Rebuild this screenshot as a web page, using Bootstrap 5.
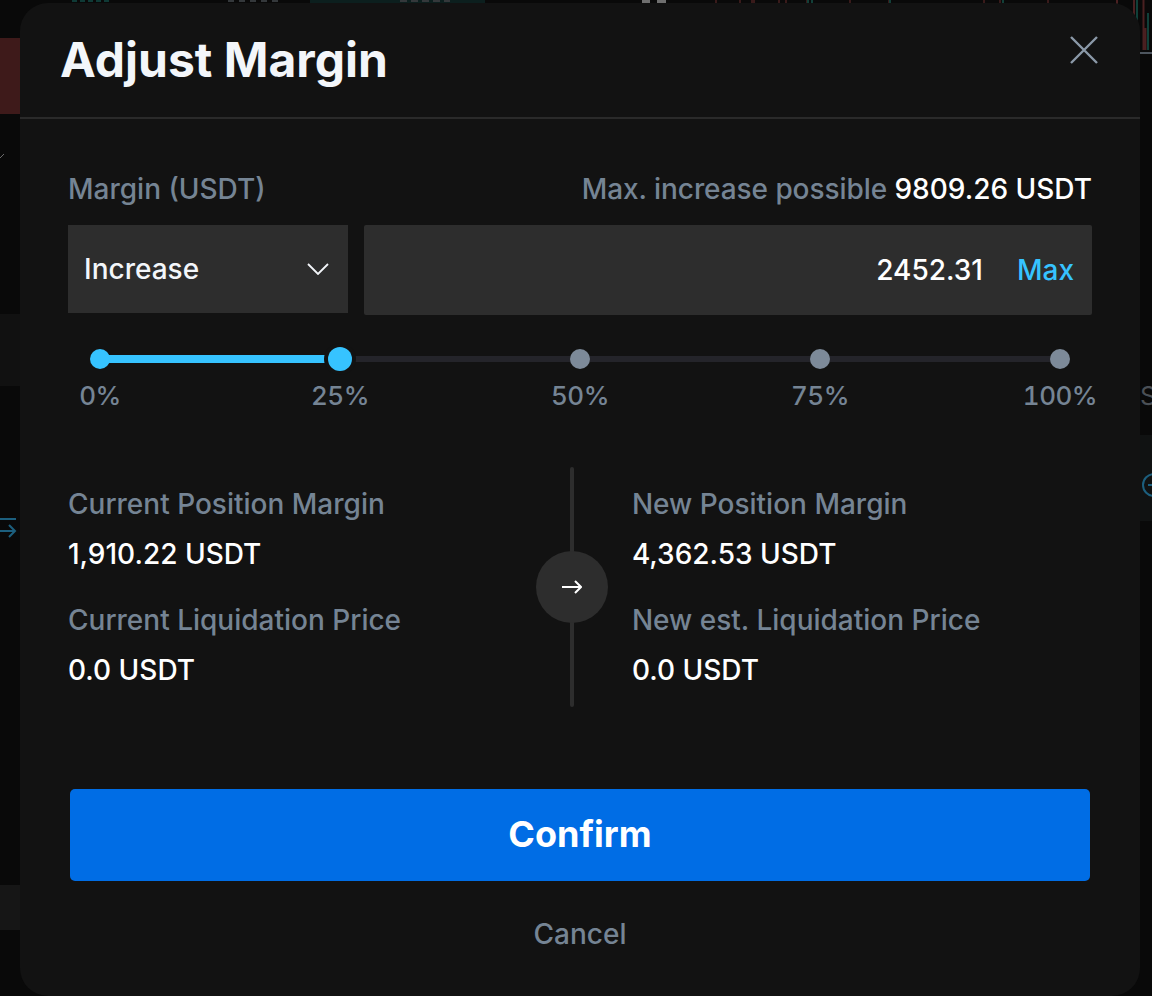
<!DOCTYPE html>
<html lang="en">
<head>
  <meta charset="UTF-8" />
  <meta name="viewport" content="width=device-width, initial-scale=1" />
  <title>Adjust Margin</title>
  <link rel="stylesheet" href="https://cdn.jsdelivr.net/npm/bootstrap@5.3.0/dist/css/bootstrap.min.css" />
  <style>
    html, body { height: 996px; overflow: hidden; }
    body { background: #090909; font-family: Inter, "Liberation Sans", sans-serif; }

    /* dimmed page behind the dialog */
    .bg-piece { position: absolute; }
    .bg-red { left: 0; top: 38px; width: 20px; height: 76px; background: #3e1a1a; }
    .bg-band-a { left: 0; top: 314px; width: 20px; height: 72px; background: #111; }
    .bg-band-b { left: 0; top: 885px; width: 20px; height: 45px; background: #161616; }
    .bg-band-c { left: 1140px; top: 435px; width: 12px; height: 86px; background: #101212; }
    .bg-s { left: 1140px; top: 382px; color: #4a4f55; font-size: 26px; line-height: 28px; }
    .bg-art { left: 0; top: 0; }

    .adjust-modal { position: absolute; left: 20px; top: 3px; width: 1120px; height: 993px; background: #121212; border-radius: 28px; }
    .adjust-head { height: 116px; border-bottom: 2px solid #2a2a2a; padding: 0 40px; }
    .adjust-title { font-size: 48px; font-weight: 700; line-height: 114px; color: #f3f6fa; margin: 0; }
    .adjust-close { position: absolute; right: 42px; top: 33px; background: none; border: 0; padding: 0; line-height: 0; }

    .adjust-body { padding: 52px 48px 0; }
    .label-row { height: 36px; margin-bottom: 18px; font-size: 28px; font-weight: 500; line-height: 36px; }
    .muted-text { color: #758494; }
    .max-note { letter-spacing: -.07px; }
    .white-text { color: #fff; letter-spacing: 0; }
    .field-row { gap: 16px; }
    .side-select { width: 280px; height: 88px; background: #2d2d2d; color: #f3f6fa; padding: 0 19px 0 16px; font-size: 28px; font-weight: 500; }
    .amount-box { width: 728px; height: 90px; background: #2d2d2d; border-radius: 2px; padding: 0 18px 0 16px; font-size: 28px; font-weight: 500; color: #fff; }
    .max-link { color: #36c3ff; margin-left: 34px; }

    .slider-wrap { position: relative; height: 24px; margin: 32px 20px 0 20px; }
    .slider-track { position: absolute; left: 12px; right: 12px; top: 9px; height: 6px; background: #24242a; }
    .slider-fill { position: absolute; left: 12px; width: 240px; top: 8px; height: 8px; background: #36c3ff; }
    .slider-dot { position: absolute; top: 2px; width: 20px; height: 20px; margin-left: -10px; border-radius: 50%; background: #7d8a99; }
    .dot-on { background: #36c3ff; }
    .dot-big { top: 0; width: 24px; height: 24px; margin-left: -12px; box-shadow: 0 0 0 4px #121212; }
    .slider-labels { height: 36px; margin: 7px 0 0; position: relative; font-size: 26px; font-weight: 500; line-height: 36px; color: #758494; font-variant-numeric: tabular-nums; letter-spacing: -.5px; }
    .slider-labels span { position: absolute; transform: translateX(-50%); }

    .info-grid { height: 240px; margin-top: 53px; }
    .info-col { width: 504px; }
    .info-right { padding-left: 58px; width: 520px; }
    .info-label { font-size: 28px; font-weight: 500; line-height: 36px; color: #758494; margin-top: 19px; }
    .info-value { font-size: 28px; font-weight: 500; line-height: 36px; color: #fff; margin-top: 14px; margin-bottom: 30px; }
    .info-divider { width: 4px; height: 240px; background: #2d2d2d; border-radius: 2px; position: relative; }
    .arrow-badge { position: absolute; left: -34px; top: 84px; width: 72px; height: 72px; border-radius: 50%; background: #2d2d2d; }

    .confirm-btn { display: block; width: 1020px; height: 92px; margin: 82px 0 0 2px; padding: 0 0 2px; border: 0; border-radius: 5px; background: #006de5; color: #fff; font-size: 36px; font-weight: 700; }
    .cancel-btn { display: block; width: 1020px; margin: 32px 0 0 2px; background: none; border: 0; padding: 0; color: #758494; font-size: 28px; font-weight: 500; line-height: 42px; text-align: center; }
  </style>
</head>
<body>
  <!-- page behind the dialog -->
  <div class="bg-piece bg-red"></div>
  <div class="bg-piece bg-band-a"></div>
  <div class="bg-piece bg-band-b"></div>
  <div class="bg-piece bg-band-c"></div>
  <div class="bg-piece bg-s">S</div>
  <svg class="bg-piece bg-art" width="1152" height="996" viewBox="0 0 1152 996" fill="none">
    <rect x="310" y="0" width="175" height="3" fill="#0c1f1e"/>
    <path d="M72 0h40" stroke="#0f3a36" stroke-width="4" stroke-dasharray="5 3"/>
    <path d="M228 0h52" stroke="#34383b" stroke-width="4" stroke-dasharray="6 5"/>
    <path d="M400 0h50" stroke="#34383b" stroke-width="4" stroke-dasharray="7 4"/>
    <rect x="642" y="0" width="8" height="3" fill="#6f6f6f"/>
    <rect x="657" y="0" width="9" height="3" fill="#6f6f6f"/>
    <path d="M716 0v3M740 0v3M752 0v3M754 0v3M779 0v3M786 0v3M807 0v3M850 0v3M889 0v3M984 0v3M1000 0v3M1048 0v3" stroke="#4a2021" stroke-width="1.500"/>
    <path d="M808 0v3M812 0v3M890 0v3M1003 0v3" stroke="#124039" stroke-width="2"/>
    <path d="M1117 0v5M1134 0v18" stroke="#4a2021" stroke-width="2"/>
    <path d="M1137 0v24" stroke="#104039" stroke-width="2"/>
    <path d="M1143.500 0v50M1145.500 28v22" stroke="#4a2021" stroke-width="2"/>
    <path d="M1148 13v37" stroke="#104039" stroke-width="2"/>
    <rect x="1140" y="52" width="12" height="2" fill="#4d555e"/>
    <path d="M0 158l4-4" stroke="#6b6b6b" stroke-width="1"/>
    <path d="M0 519h16M0 531h15M9 525l6 6-6 6" stroke="#1c5f7e" stroke-width="2"/>
    <circle cx="1154" cy="485" r="11" stroke="#1c5f7e" stroke-width="2"/>
    <path d="M1148 485h4" stroke="#1c5f7e" stroke-width="2"/>
  </svg>

  <div class="adjust-modal">
    <div class="adjust-head">
      <h1 class="adjust-title">Adjust Margin</h1>
      <button class="adjust-close" type="button" aria-label="Close">
        <svg width="28" height="28" viewBox="0 0 28 28" fill="none" stroke="#8b99a8" stroke-width="2.4"><path d="M1 1l26 26M27 1L1 27"/></svg>
      </button>
    </div>

    <div class="adjust-body">
      <div class="label-row d-flex justify-content-between">
        <span class="muted-text">Margin (USDT)</span>
        <span class="muted-text max-note">Max. increase possible <span class="white-text">9809.26 USDT</span></span>
      </div>

      <div class="field-row d-flex align-items-start">
        <div class="side-select d-flex align-items-center justify-content-between">
          <span>Increase</span>
          <svg width="22" height="12" viewBox="0 0 22 12" fill="none" stroke="#f3f6fa" stroke-width="1.8"><path d="M1 1l10 10L21 1"/></svg>
        </div>
        <div class="amount-box d-flex align-items-center justify-content-end">
          <span>2452.31</span>
          <span class="max-link">Max</span>
        </div>
      </div>

      <div class="slider-wrap">
        <div class="slider-track"></div>
        <div class="slider-fill"></div>
        <div class="slider-dot dot-on" style="left: 12px"></div>
        <div class="slider-dot dot-on dot-big" style="left: 252px"></div>
        <div class="slider-dot" style="left: 492px"></div>
        <div class="slider-dot" style="left: 732px"></div>
        <div class="slider-dot" style="left: 972px"></div>
      </div>
      <div class="slider-labels">
        <span style="left: 32px">0%</span>
        <span style="left: 272px">25%</span>
        <span style="left: 512px">50%</span>
        <span style="left: 752px">75%</span>
        <span style="left: 992px">100%</span>
      </div>

      <div class="info-grid d-flex">
        <div class="info-col">
          <div class="info-label">Current Position Margin</div>
          <div class="info-value">1,910.22 USDT</div>
          <div class="info-label">Current Liquidation Price</div>
          <div class="info-value">0.0 USDT</div>
        </div>
        <div class="info-divider">
          <div class="arrow-badge d-flex align-items-center justify-content-center">
            <svg width="20" height="14" viewBox="0 0 20 14" fill="none" stroke="#fff" stroke-width="2"><path d="M0 7h19M13 1l6 6-6 6"/></svg>
          </div>
        </div>
        <div class="info-right">
          <div class="info-label">New Position Margin</div>
          <div class="info-value">4,362.53 USDT</div>
          <div class="info-label">New est. Liquidation Price</div>
          <div class="info-value">0.0 USDT</div>
        </div>
      </div>

      <button class="confirm-btn" type="button">Confirm</button>
      <button class="cancel-btn" type="button">Cancel</button>
    </div>
  </div>
  <script src="https://cdn.jsdelivr.net/npm/bootstrap@5.3.0/dist/js/bootstrap.bundle.min.js"></script>
</body>
</html>
